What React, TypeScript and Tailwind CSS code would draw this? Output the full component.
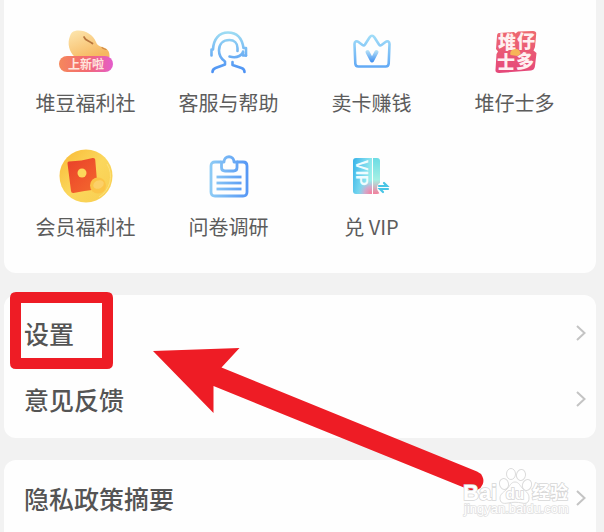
import type { ReactNode } from "react";

type Service = {
  label: string;
  icon: ReactNode;
};

const services: Service[] = [
  { label: "堆豆福利社", icon: <BeanIcon /> },
  { label: "客服与帮助", icon: <SupportIcon /> },
  { label: "卖卡赚钱", icon: <CrownIcon /> },
  { label: "堆仔士多", icon: <StoreIcon /> },
  { label: "会员福利社", icon: <CoinIcon /> },
  { label: "问卷调研", icon: <SurveyIcon /> },
  { label: "兑 VIP", icon: <VipIcon /> },
];

export default function App() {
  return (
    <div className="relative flex min-h-screen flex-col gap-[22px] overflow-hidden bg-[#f2f2f2] pl-1 pr-2 font-['Noto_Sans_CJK_SC',sans-serif]">
      <section className="grid grid-cols-4 gap-y-[30px] rounded-b-xl bg-[#fefefe] px-[10px] pb-[31px] pt-6">
        {services.map((service) => (
          <ServiceTile key={service.label} {...service} />
        ))}
      </section>

      <nav className="rounded-xl bg-[#fefefe] pb-[6px] pt-[5px]">
        <MenuRow label="设置" />
        <MenuRow label="意见反馈" />
      </nav>

      <nav className="flex-1 rounded-t-xl bg-[#fefefe] pt-[5px]">
        <MenuRow label="隐私政策摘要" />
      </nav>

      <Annotation />
      <Watermark />
    </div>
  );
}

function ServiceTile({ label, icon }: Service) {
  return (
    <button type="button" className="flex flex-col items-center gap-2">
      <span className="flex h-14 items-center justify-center">{icon}</span>
      <span className="whitespace-nowrap text-[20px] leading-[30px] text-[#5c5c5c]">{label}</span>
    </button>
  );
}

function MenuRow({ label }: { label: string }) {
  return (
    <a href="#" className="flex items-center justify-between py-4 pl-5 pr-[10px]">
      <span className="text-[25px] font-medium leading-[34px] text-[#545454]">{label}</span>
      <svg width="10" height="16" viewBox="0 0 10 16" fill="none" stroke="#c4c4c4" strokeWidth="2">
        <path d="M1 1l7.5 7L1 15" />
      </svg>
    </a>
  );
}

function BeanIcon() {
  return (
    <svg width="56" height="56" viewBox="0 0 56 56">
      <defs>
        <linearGradient id="bean" x1="0" y1="0" x2="0.6" y2="1">
          <stop offset="0" stopColor="#fde7b0" />
          <stop offset="1" stopColor="#f6b860" />
        </linearGradient>
        <linearGradient id="bean-tag" x1="0" y1="0" x2="1" y2="0">
          <stop offset="0" stopColor="#f5885c" />
          <stop offset="0.5" stopColor="#f36a70" />
          <stop offset="1" stopColor="#e45ccb" />
        </linearGradient>
      </defs>
      <path
        d="M17 7C25 5 35 10 38 18c1 3 3 4 6 5 5 1 8 4 7.500 10H17C11 28 9 19 12 12c1-3 2.500-4.500 5-5z"
        fill="url(#bean)"
      />
      <path d="M26 13c1 3.500 5 3.500 8.500 6.500" fill="none" stroke="#b7753d" strokeWidth="1.800" strokeLinecap="round" />
      <path d="M44 23.500c.5 1 2 1.500 4 2" fill="none" stroke="#d18a48" strokeWidth="1.200" strokeLinecap="round" />
      <rect x="1" y="32" width="54" height="16" rx="8" fill="url(#bean-tag)" />
      <text
        x="28"
        y="44.500"
        textAnchor="middle"
        fontSize="12"
        fontWeight="700"
        fill="#ffe4dc"
        fontFamily="Noto Sans CJK SC, sans-serif"
      >
        上新啦
      </text>
    </svg>
  );
}

function SupportIcon() {
  return (
    <svg width="42" height="44" viewBox="0 0 42 44" fill="none" strokeWidth="2.600">
      <defs>
        <linearGradient id="support" gradientUnits="userSpaceOnUse" x1="0" y1="2" x2="0" y2="42">
          <stop offset="0" stopColor="#9ddcf3" />
          <stop offset="1" stopColor="#4c91f4" />
        </linearGradient>
      </defs>
      <g stroke="url(#support)" strokeLinecap="round" strokeLinejoin="round">
        <path d="M3.500 25.500v-6H5C5.500 9 11 2.500 20 2.500c8.500 0 14 5.500 15.500 15.500H38v7.500" />
        <path d="M38 25.500h-3v-4" />
        <path d="M29.500 21v-3c0-5-3.500-8-8-8-6.500 0-10.500 4-10.500 10.500 0 5 1.500 8 6 11v3l-9.500 3.500c-2 .8-3 2-3 4" />
        <path d="M21.500 26.500c5.500 1.500 10.500 .5 13.500-4" />
        <path d="M24.500 32v3l9 3c2 .7 3 2 3 4" />
      </g>
    </svg>
  );
}

function CrownIcon() {
  return (
    <svg width="40" height="40" viewBox="0 0 40 40" fill="none">
      <defs>
        <linearGradient id="crown" gradientUnits="userSpaceOnUse" x1="0" y1="4" x2="0" y2="36">
          <stop offset="0" stopColor="#a0dcf8" />
          <stop offset="1" stopColor="#60a8f5" />
        </linearGradient>
        <linearGradient id="crown-v" gradientUnits="userSpaceOnUse" x1="0" y1="17" x2="0" y2="30">
          <stop offset="0" stopColor="#c7edf9" />
          <stop offset="1" stopColor="#3f8ff0" />
        </linearGradient>
      </defs>
      <path
        d="M2.500 12c0-2.500 2-3.500 4-2l4 3c1 .7 1.800.5 2.500-.5l4.500-7c1.600-2.400 3.400-2.400 5 0l4.500 7c.7 1 1.500 1.200 2.500.5l4-3c2-1.500 4-.5 4 2L36.700 31.500c-.1 2-1 3-3 3H6.300c-2 0-2.900-1-3-3z"
        stroke="url(#crown)"
        strokeWidth="2.600"
        strokeLinejoin="round"
      />
      <path
        d="M15.500 20l4.500 8.500 4.500-8.500"
        stroke="url(#crown-v)"
        strokeWidth="4"
        strokeLinecap="round"
        strokeLinejoin="round"
      />
    </svg>
  );
}

function StoreIcon() {
  return (
    <svg width="48" height="48" viewBox="0 0 48 48" fontFamily="Noto Sans CJK SC, sans-serif">
      <defs>
        <linearGradient id="store" x1="0" y1="0" x2="0" y2="1">
          <stop offset="0" stopColor="#ee6a70" />
          <stop offset="1" stopColor="#e5487a" />
        </linearGradient>
      </defs>
      <path
        d="M8 5l15-1 1.500 1.500L27 3.500l15-.5q3.500 0 3.200 3L44 19l-1.500 3.500L45.500 25 44 38q-.5 4-4 4.500L8 45q-4 0-3.500-3.500L5.500 26 7 23.500 5 21 6 8q.2-3 2-3z"
        fill="url(#store)"
      />
      <g fill="#fff0f0" fontSize="18" fontWeight="900" textAnchor="middle">
        <text x="16" y="21">堆</text>
        <text x="35" y="20">仔</text>
        <text x="15" y="41">士</text>
        <text x="34" y="40">多</text>
      </g>
      <path d="M19.500 27c-1-3 1-6 5-6 3 0 5 2 5 5l-3 2z" fill="#f7b458" />
    </svg>
  );
}

function CoinIcon() {
  return (
    <svg width="54" height="54" viewBox="0 0 54 54">
      <defs>
        <linearGradient id="coin" x1="0" y1="0" x2="1" y2="1">
          <stop offset="0" stopColor="#f9b936" />
          <stop offset="0.5" stopColor="#fbd75c" />
          <stop offset="1" stopColor="#f8cd50" />
        </linearGradient>
        <linearGradient id="packet" x1="0" y1="0" x2="0.8" y2="1">
          <stop offset="0" stopColor="#e8402a" />
          <stop offset="0.6" stopColor="#f0572c" />
          <stop offset="1" stopColor="#f2662e" />
        </linearGradient>
      </defs>
      <circle cx="27" cy="27" r="26.500" fill="url(#coin)" />
      <path d="M48 15a24 24 0 0 1-8 33" fill="none" stroke="#fde27a" strokeWidth="1" />
      <path
        d="M10 12.500q13-.5 23.500-3.500 2.500-.5 2.700 1.500L38.500 38q0 2-2 2.500-11 1-22 3.500-2.300.3-2.500-2L8.500 14.500q-.2-1.800 1.500-2z"
        fill="url(#packet)"
      />
      <circle cx="23" cy="24" r="4.500" fill="#fcd85b" />
      <circle cx="39" cy="36.500" r="8" fill="#fbc447" />
      <ellipse cx="39.500" cy="35.500" rx="5.500" ry="4" fill="#fcd068" transform="rotate(-25 39.500 35.500)" />
    </svg>
  );
}

function SurveyIcon() {
  return (
    <svg width="40" height="46" viewBox="0 0 40 46" fill="none" strokeWidth="2.800">
      <defs>
        <linearGradient id="survey" gradientUnits="userSpaceOnUse" x1="0" y1="0" x2="38" y2="0">
          <stop offset="0" stopColor="#8fcdf5" />
          <stop offset="1" stopColor="#5798f5" />
        </linearGradient>
      </defs>
      <g stroke="url(#survey)">
        <path d="M12 9H6q-4 0-4 4v26q0 4 4 4h28q4 0 4-4V13q0-4-4-4h-6" />
        <path d="M12.500 9h2.500c0-7 10-7 10 0h3v5.500q0 3.500-3.500 3.500h-8.500q-3.500 0-3.500-3.500z" strokeLinejoin="round" />
        <path d="M7.500 24h25" />
        <path d="M7.500 30h25" />
        <path d="M7.500 36h25" />
      </g>
    </svg>
  );
}

function VipIcon() {
  return (
    <svg width="40" height="40" viewBox="0 0 40 40">
      <defs>
        <linearGradient id="vip" x1="0" y1="0" x2="1" y2="0.4">
          <stop offset="0" stopColor="#35b2e8" />
          <stop offset="0.5" stopColor="#6fd2ee" />
          <stop offset="1" stopColor="#9cf0ec" />
        </linearGradient>
        <radialGradient id="vip-glow" gradientUnits="userSpaceOnUse" cx="19" cy="37" r="13">
          <stop offset="0" stopColor="#f67f9e" />
          <stop offset="0.5" stopColor="#dd9cc6" stopOpacity="0.8" />
          <stop offset="1" stopColor="#9db4e4" stopOpacity="0" />
        </radialGradient>
        <linearGradient id="vip-stub" x1="0" y1="0" x2="0" y2="1">
          <stop offset="0" stopColor="#6cdce4" />
          <stop offset="0.6" stopColor="#a4f0e4" />
          <stop offset="1" stopColor="#f37f9d" />
        </linearGradient>
      </defs>
      <path d="M4 2h16v36H4q-3 0-3-3V5q0-3 3-3z" fill="url(#vip)" />
      <path d="M4 2h16v36H4q-3 0-3-3V5q0-3 3-3z" fill="url(#vip-glow)" />
      <path d="M21 2h4q3 0 3 3v30q0 3-3 3h-4z" fill="url(#vip-stub)" />
      <text
        transform="translate(4 4) rotate(90)"
        fontSize="16"
        fontWeight="700"
        fill="#effcff"
        fontFamily="Liberation Sans, sans-serif"
      >
        VIP
      </text>
      <circle cx="31" cy="32" r="6" fill="#fefefe" />
      <path d="M27 30h8l-3-3M36 33h-8l3 3" fill="none" stroke="#48c5e5" strokeWidth="2.200" strokeLinecap="round" />
    </svg>
  );
}

// Highlight frame and pointer drawn over the menu
function Annotation() {
  return (
    <svg
      className="pointer-events-none absolute left-0 top-0"
      width="500"
      height="532"
      viewBox="0 0 500 532"
      aria-hidden="true"
    >
      <path
        d="M16 292h91q6 0 6 6v65q0 6-6 6H16q-6 0-6-6v-65q0-6 6-6zM21 303v55h81v-55z"
        fill="#ee1c25"
        fillRule="evenodd"
      />
      <path
        d="M153 351l86.500-3-18 19.500L477 471.500a9.800 9.800 0 0 1-7 18.500L213.500 386v27z"
        fill="#ee1c25"
      />
    </svg>
  );
}

function Watermark() {
  return (
    <svg
      className="pointer-events-none absolute bottom-3 right-8"
      width="110"
      height="56"
      viewBox="0 0 110 56"
      aria-hidden="true"
    >
      <g fill="#fff" stroke="#dcdcdc" strokeWidth="1">
        <ellipse cx="42" cy="20" rx="4.500" ry="5.500" transform="rotate(-15 42 20)" />
        <ellipse cx="49" cy="10" rx="4.500" ry="5.500" />
        <ellipse cx="59" cy="11" rx="4.500" ry="5.500" transform="rotate(10 59 11)" />
        <ellipse cx="65" cy="21" rx="4.500" ry="5.500" transform="rotate(20 65 21)" />
        <path d="M53 18c4 0 5 4 8 7 4 3 6 5 6 9 0 5-3 6-7 5-5-1-9-1-14 0-5 1-8 0-8-5 0-4 4-6 7-9s4-7 8-7z" />
      </g>
      <g
        fill="#fff"
        stroke="#d6d6d6"
        strokeWidth="1.500"
        paintOrder="stroke"
        fontFamily="Liberation Sans, Noto Sans CJK SC, sans-serif"
        fontWeight="700"
      >
        <text x="1" y="36" fontSize="22">Bai</text>
        <text x="53" y="35" fontSize="15" textAnchor="middle">du</text>
        <text x="70" y="35" fontSize="18">经验</text>
        <text x="2" y="49" fontSize="13" fontWeight="400" stroke="#e0e0e0">jingyan.baidu.com</text>
      </g>
    </svg>
  );
}
